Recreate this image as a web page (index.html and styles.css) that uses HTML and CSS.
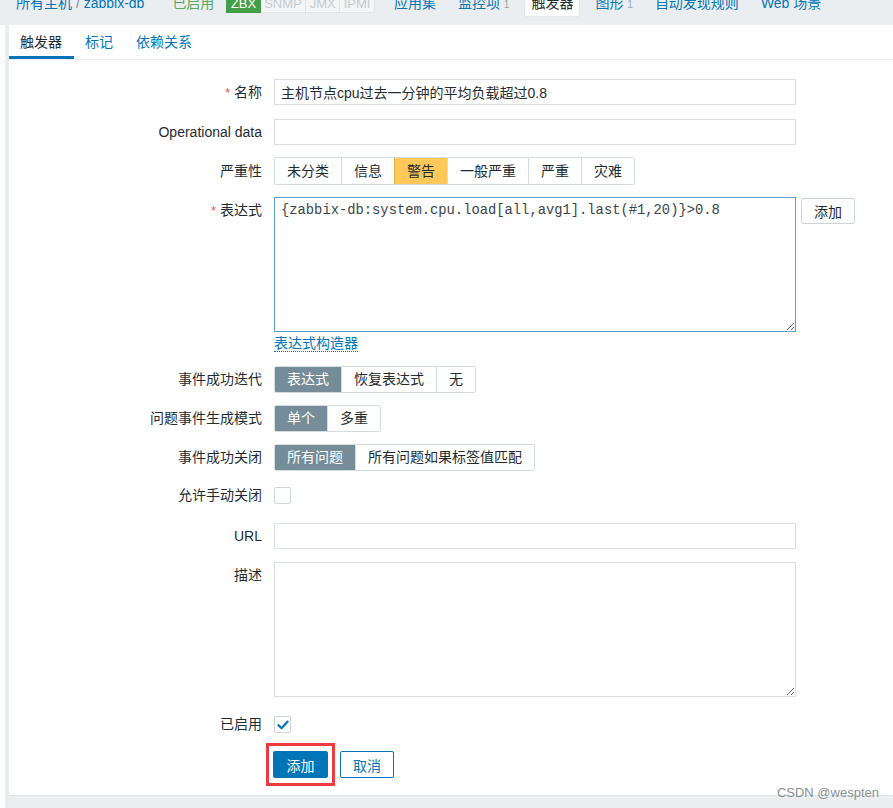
FILE: index.html
```html
<!DOCTYPE html>
<html lang="zh">
<head>
<meta charset="utf-8">
<title>触发器</title>
<link rel="stylesheet" href="styles.css">
</head>
<body>
<div class="topnav">
  <div class="topnav-inner">
    <span class="crumb"><a class="lnk">所有主机</a> <span class="sep">/</span> <a class="lnk">zabbix-db</a></span>
    <span class="status">已启用</span>
    <span class="badges"><span class="badge on">ZBX</span><span class="badge">SNMP</span><span class="badge">JMX</span><span class="badge">IPMI</span></span>
    <a class="lnk nav-item">应用集</a>
    <a class="lnk nav-item">监控项 <sup class="cnt">1</sup></a>
    <span class="nav-item current">触发器</span>
    <a class="lnk nav-item">图形 <sup class="cnt">1</sup></a>
    <a class="lnk nav-item">自动发现规则</a>
    <a class="lnk nav-item">Web 场景</a>
  </div>
</div>

<div class="wrap">
  <div class="panel">
    <div class="tabs">
      <span class="tab active">触发器</span>
      <span class="tab">标记</span>
      <span class="tab">依赖关系</span>
    </div>

    <div class="form">
      <div class="row r13">
        <div class="label"><span class="req">*</span> 名称</div>
        <div class="control"><input class="text" type="text" value="主机节点cpu过去一分钟的平均负载超过0.8"></div>
      </div>
      <div class="row">
        <div class="label">Operational data</div>
        <div class="control"><input class="text" type="text" value=""></div>
      </div>
      <div class="row">
        <div class="label tall">严重性</div>
        <div class="control">
          <div class="seg tall">
            <span>未分类</span><span>信息</span><span class="warn">警告</span><span>一般严重</span><span>严重</span><span>灾难</span>
          </div>
        </div>
      </div>
      <div class="row r14">
        <div class="label ta"><span class="req">*</span> 表达式</div>
        <div class="control col">
          <div class="expr-line">
            <textarea class="area expr" spellcheck="false">{zabbix-db:system.cpu.load[all,avg1].last(#1,20)}>0.8</textarea>
            <button class="btn-alt">添加</button>
          </div>
          <a class="builder">表达式构造器</a>
        </div>
      </div>
      <div class="row">
        <div class="label">事件成功迭代</div>
        <div class="control">
          <div class="seg"><span class="sel">表达式</span><span>恢复表达式</span><span>无</span></div>
        </div>
      </div>
      <div class="row">
        <div class="label">问题事件生成模式</div>
        <div class="control">
          <div class="seg"><span class="sel">单个</span><span>多重</span></div>
        </div>
      </div>
      <div class="row r16">
        <div class="label">事件成功关闭</div>
        <div class="control">
          <div class="seg"><span class="sel">所有问题</span><span>所有问题如果标签值匹配</span></div>
        </div>
      </div>
      <div class="row r19">
        <div class="label cb">允许手动关闭</div>
        <div class="control"><span class="check"></span></div>
      </div>
      <div class="row r13">
        <div class="label">URL</div>
        <div class="control"><input class="text" type="text" value=""></div>
      </div>
      <div class="row r19">
        <div class="label ta">描述</div>
        <div class="control"><textarea class="area" spellcheck="false"></textarea></div>
      </div>
      <div class="row r10">
        <div class="label cb">已启用</div>
        <div class="control"><span class="check">
          <svg width="12" height="10" viewBox="0 0 12 10"><path d="M1.5 5.2 L4.6 8.2 L10.6 1.6" fill="none" stroke="#0275b8" stroke-width="2.2" stroke-linecap="round" stroke-linejoin="round"/></svg>
        </span></div>
      </div>
      <div class="row last">
        <div class="label"></div>
        <div class="control actions">
          <span class="mark"><button class="btn-main">添加</button></span>
          <button class="btn-cancel">取消</button>
        </div>
      </div>
    </div>
  </div>
  <div class="watermark">CSDN @wespten</div>
</div>
</body>
</html>
```

FILE: styles.css
```css
html, body {
  margin: 0;
  padding: 0;
}
body {
  background: #ffffff;
  font-family: "Liberation Sans", Arial, "Noto Sans CJK SC", sans-serif;
  font-size: 14px;
  color: #1f2c33;
}

/* top navigation (clipped at top) */
.topnav {
  height: 25px;
  background: #ebeef0;
  overflow: hidden;
}
.topnav-inner {
  display: flex;
  align-items: flex-start;
  gap: 22px;
  margin-top: -6px;
  padding-left: 16px;
  line-height: 18px;
  white-space: nowrap;
}
.lnk {
  color: #0275b8;
  text-decoration: none;
}
.sep {
  color: #768d99;
}
.crumb {
  margin-right: 6px;
}
.status {
  color: #59a85c;
  margin-right: -10px;
}
.badges {
  display: flex;
  margin-right: -3px;
  line-height: 17px;
  font-size: 13px;
}
.badge {
  padding: 0 3.5px;
  border: 1px solid #dfe4e7;
  border-left: none;
  color: #c4cbcf;
  background: #f4f5f6;
}
.badge:last-child {
  border-radius: 0 0 2px 0;
}
.badge.on {
  background: #429e47;
  border-color: #429e47;
  color: #ffffff;
  border-left: 1px solid #429e47;
}
.cnt {
  font-size: 10px;
  color: #9aa7ae;
  vertical-align: baseline;
}
.nav-item.current {
  background: #ffffff;
  padding: 0 6px 4px;
  margin: 0 -6px;
  color: #1f2c33;
  box-shadow: 0 0 2px rgba(0,0,0,0.08);
}

/* page wrap */
.wrap {
  position: relative;
  margin-left: 5px;
  background: #ebeef0;
  padding-left: 4px;
  padding-bottom: 12px;
}
.panel {
  background: #ffffff;
  border-bottom: 1px solid #dfe4e7;
}

/* tabs */
.tabs {
  display: flex;
  height: 34px;
  border-bottom: 1px solid #ebeef0;
}
.tab {
  padding: 0 11.5px;
  line-height: 34px;
  color: #0275b8;
  box-sizing: border-box;
}
.tab.active {
  color: #1f2c33;
  border-bottom: 3px solid #0275b8;
  height: 34px;
  padding-left: 11px;
}

/* form */
.form {
  padding: 19px 0 9px;
}
.row {
  display: flex;
  align-items: flex-start;
  margin-bottom: 12px;
}
.row.r10 { margin-bottom: 10px; }
.row.r13 { margin-bottom: 13px; }
.row.r14 { margin-bottom: 14px; }
.row.r16 { margin-bottom: 16px; }
.row.r19 { margin-bottom: 19px; }
.row.last { margin-bottom: 0; }

.label {
  width: 253px;
  flex: none;
  text-align: right;
  padding-right: 12px;
  line-height: 26px;
  white-space: nowrap;
}
.label.tall { line-height: 28px; }
.label.ta { line-height: 18px; padding-top: 4px; }
.label.cb { line-height: 17px; }
.req {
  color: #e45959;
  font-size: 13px;
}
.control {
  display: flex;
  align-items: flex-start;
}
.control.col {
  flex-direction: column;
}

.text {
  width: 522px;
  height: 26px;
  box-sizing: border-box;
  border: 1px solid #d9dfe2;
  border-radius: 0;
  padding: 0 6px;
  margin: 0;
  font: inherit;
  color: #1f2c33;
  background: #ffffff;
  outline: none;
}

.area {
  display: block;
  width: 522px;
  height: 135px;
  box-sizing: border-box;
  border: 1px solid #d9dfe2;
  padding: 4px 6px;
  margin: 0;
  font-family: "Liberation Mono", "Courier New", monospace;
  font-size: 13.8px;
  line-height: 18px;
  color: #3a454b;
  background: #ffffff;
  resize: both;
  outline: none;
}
.area.expr {
  border-color: #5c9fce;
}
.expr-line {
  display: flex;
  align-items: flex-start;
  gap: 5px;
}
.btn-alt {
  margin-top: 1px;
  height: 26px;
  width: 54px;
  padding: 0;
  border: 1px solid #ccd5d9;
  border-radius: 2px;
  background: #ffffff;
  color: #1f2c33;
  font: inherit;
}
.builder {
  margin-top: 4px;
  line-height: 15px;
  color: #0275b8;
  border-bottom: 1px dotted #0275b8;
  text-decoration: none;
}

/* segmented buttons */
.seg {
  display: flex;
  border: 1px solid #d5dde1;
  border-radius: 2px;
  height: 27px;
  box-sizing: border-box;
  overflow: hidden;
}
.seg.tall {
  height: 28px;
}
.seg span {
  padding: 0 12px;
  line-height: 25px;
  border-left: 1px solid #d5dde1;
  white-space: nowrap;
  color: #1f2c33;
  background: #ffffff;
}
.seg.tall span {
  line-height: 26px;
}
.seg span:first-child {
  border-left: none;
}
.seg span.warn {
  background: #ffc859;
  border-left-color: #e0ae4a;
  border-right: 1px solid #e0ae4a;
  margin-right: -1px;
}
.seg span.sel {
  background: #768d99;
  color: #ffffff;
  border-color: #768d99;
}

/* checkbox */
.check {
  width: 17px;
  height: 17px;
  box-sizing: border-box;
  border: 1px solid #ccd5d9;
  border-radius: 2px;
  background: #ffffff;
  display: flex;
  align-items: center;
  justify-content: center;
}

/* actions */
.actions {
  align-items: center;
}
.mark {
  display: inline-flex;
  border: 3px solid #ef3a3f;
  padding: 5px 4px;
  margin-left: -8px;
}
.btn-main {
  width: 55px;
  height: 27px;
  padding: 0;
  border: 1px solid #0275b8;
  border-radius: 2px;
  background: #0275b8;
  color: #ffffff;
  font: inherit;
}
.btn-cancel {
  margin-left: 5px;
  width: 54px;
  height: 27px;
  padding: 0;
  border: 1px solid #0275b8;
  border-radius: 2px;
  background: #ffffff;
  color: #0275b8;
  font: inherit;
}

.watermark {
  position: absolute;
  right: 14px;
  bottom: 7px;
  font-size: 13px;
  color: #8a8f93;
  line-height: 16px;
}
```
